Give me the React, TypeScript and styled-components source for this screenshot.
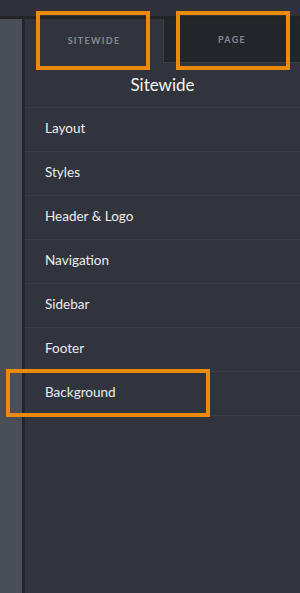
import React, { useState } from "react";
import styled, { createGlobalStyle } from "styled-components";

const GlobalStyle = createGlobalStyle`
  html, body {
    margin: 0;
    padding: 0;
    background: #31343c;
  }
  * {
    box-sizing: border-box;
  }
`;

const Screen = styled.div`
  width: 300px;
  height: 593px;
  display: flex;
  flex-direction: column;
  overflow: hidden;
  font-family: Lato, "Open Sans", sans-serif;
  background: #31343c;
`;

const TopBar = styled.div`
  height: 19px;
  background: #2f3239;
  border-bottom: 3px solid #222428;
  flex-shrink: 0;
`;

const Body = styled.div`
  flex: 1;
  display: flex;
`;

const SideStrip = styled.div`
  width: 22px;
  background: #4a4e56;
  border-right: 3px solid #23252a;
  box-sizing: content-box;
`;

const Panel = styled.div`
  flex: 1;
  display: flex;
  flex-direction: column;
  background: #31343c;
`;

const TabRow = styled.div`
  display: flex;
  height: 44px;
`;

const Tab = styled.button<{ $active: boolean }>`
  position: relative;
  flex: ${(p) => (p.$active ? "0 0 138px" : "1")};
  height: 44px;
  border: none;
  padding: 0 0 2px;
  margin: 0;
  background: ${(p) => (p.$active ? "#31343c" : "#22252a")};
  border-left: ${(p) => (p.$active ? "none" : "1px solid #3b3e45")};
  border-bottom: ${(p) => (p.$active ? "none" : "1px solid #3b3e45")};
  color: #848b96;
  font-family: Lato, "Open Sans", sans-serif;
  font-size: 9px;
  font-weight: 700;
  letter-spacing: 1.3px;
  text-transform: uppercase;
  cursor: pointer;
`;

const Highlight = styled.span<{ $left: number; $top: number; $w: number; $h: number }>`
  position: absolute;
  left: ${(p) => p.$left}px;
  top: ${(p) => p.$top}px;
  width: ${(p) => p.$w}px;
  height: ${(p) => p.$h}px;
  border: 4px solid #ec8a0c;
  pointer-events: none;
  z-index: 2;
`;

const Title = styled.div`
  height: 45px;
  display: flex;
  align-items: center;
  justify-content: center;
  padding-bottom: 1px;
  color: #f4f4f4;
  font-size: 17px;
  border-bottom: 1px solid #3b3e46;
`;

const MenuList = styled.ul`
  list-style: none;
  margin: 0;
  padding: 0;
`;

const MenuItem = styled.li`
  position: relative;
  height: 44px;
  display: flex;
  align-items: center;
  padding: 0 0 3px 20px;
  color: #ececec;
  font-size: 13.5px;
  border-bottom: 1px solid #3b3e46;
  cursor: pointer;
`;

const items = [
  "Layout",
  "Styles",
  "Header & Logo",
  "Navigation",
  "Sidebar",
  "Footer",
  "Background",
];

const App = () => {
  const [tab, setTab] = useState("sitewide");

  return (
    <Screen>
      <GlobalStyle />
      <TopBar />
      <Body>
        <SideStrip />
        <Panel>
          <TabRow>
            <Tab $active={tab === "sitewide"} onClick={() => setTab("sitewide")}>
              Sitewide
              <Highlight $left={11} $top={-8} $w={114} $h={59} />
            </Tab>
            <Tab $active={tab === "page"} onClick={() => setTab("page")}>
              Page
              <Highlight $left={12} $top={-8} $w={114} $h={59} />
            </Tab>
          </TabRow>
          <Title>Sitewide</Title>
          <MenuList>
            {items.map((item) => (
              <MenuItem key={item}>
                {item}
                {item === "Background" && (
                  <Highlight $left={-19} $top={-3} $w={204} $h={48} />
                )}
              </MenuItem>
            ))}
          </MenuList>
        </Panel>
      </Body>
    </Screen>
  );
};

export default App;
